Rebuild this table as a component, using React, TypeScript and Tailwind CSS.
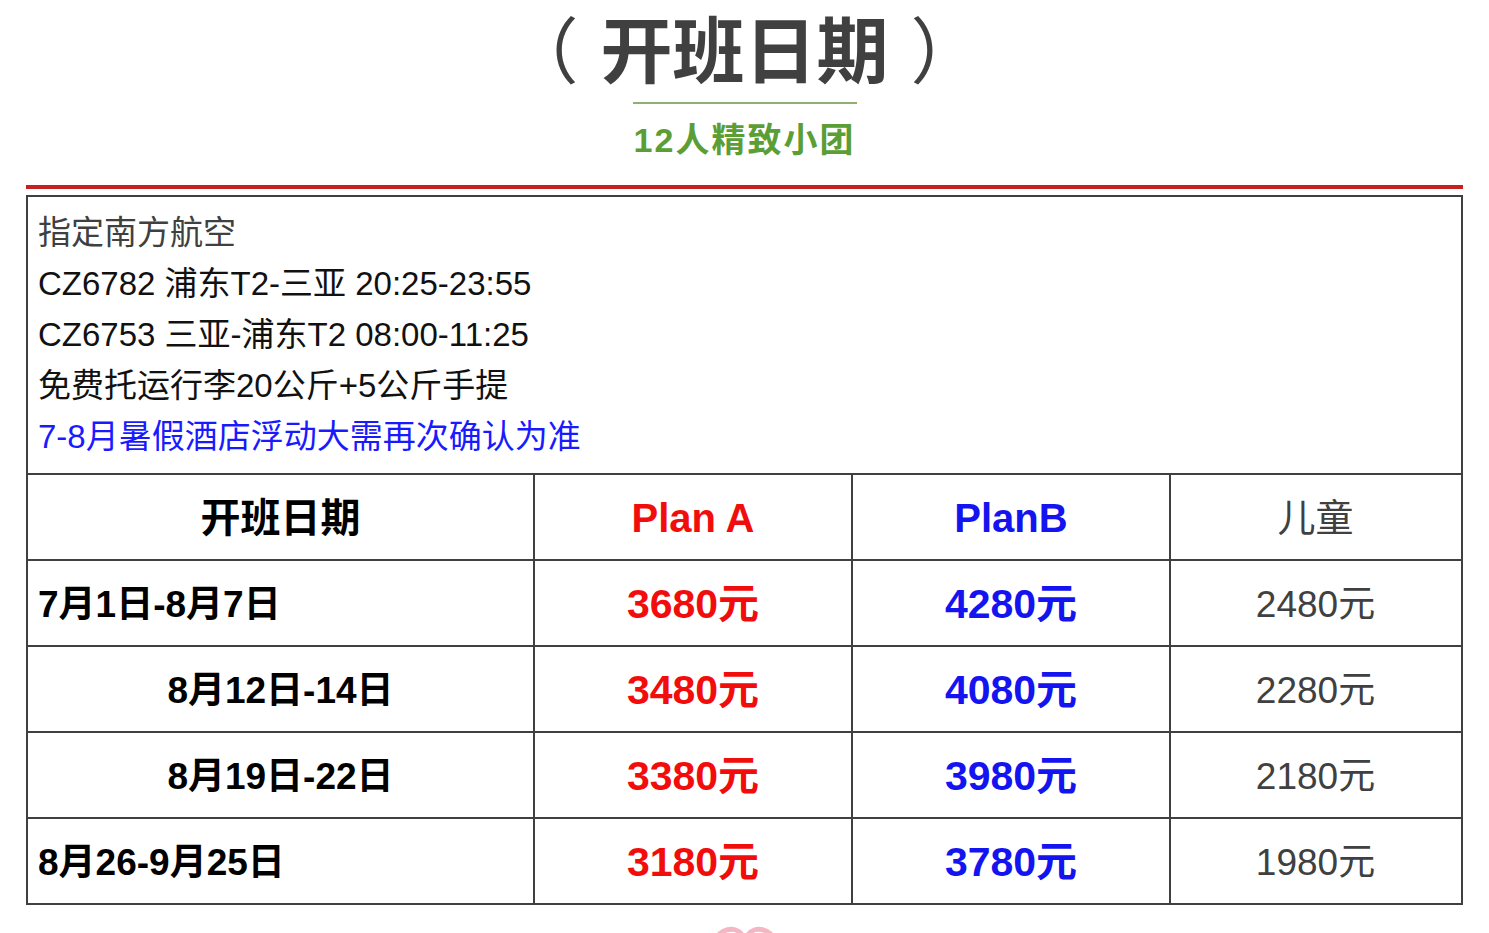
import React from "react";

const FONT = "font-['Liberation_Sans','Noto_Sans_CJK_SC',sans-serif]";

type Row = {
  date: string;
  left: boolean;
  a: string;
  b: string;
  kid: string;
};

const ROWS: Row[] = [
  { date: "7月1日-8月7日", left: true, a: "3680元", b: "4280元", kid: "2480元" },
  { date: "8月12日-14日", left: false, a: "3480元", b: "4080元", kid: "2280元" },
  { date: "8月19日-22日", left: false, a: "3380元", b: "3980元", kid: "2180元" },
  { date: "8月26-9月25日", left: true, a: "3180元", b: "3780元", kid: "1980元" },
];

const GRID = "grid grid-cols-[507px_318px_318px_289px] h-[86px] border-t-2 border-[#404040]";
const CELL = "flex items-center justify-center border-r-2 border-[#404040]";

export default function App() {
  return (
    <div className={`${FONT} w-[1489px] h-[933px] overflow-hidden bg-white`}>
      <div className="flex flex-col items-center pt-[12px]">
        <h1 className="text-[72px] leading-[80px] font-bold text-[#404040]">
          <span className="font-normal mr-[22px]">（</span>开班日期<span className="font-normal ml-[22px]">）</span>
        </h1>
        <div className="mt-[10px] w-[224px] h-[2px] bg-[#8fb070]" />
        <div className="mt-[16px] text-[34px] leading-[40px] font-bold tracking-[2px] text-[#5b9e35]">
          12人精致小团
        </div>
      </div>

      <div className="mx-[26px] mt-[25px] h-[4px] bg-[#c8201f]" />

      <div className="mx-[26px] mt-[6px] border-2 border-[#404040]">
        <div className="px-[10px] pt-[10px] pb-[11px] text-[33px] leading-[51px] text-[#111]">
          <div className="text-[#404040]">指定南方航空</div>
          <div>CZ6782 浦东T2-三亚 20:25-23:55</div>
          <div>CZ6753 三亚-浦东T2 08:00-11:25</div>
          <div>免费托运行李20公斤+5公斤手提</div>
          <div className="text-[#1a1aff]">7-8月暑假酒店浮动大需再次确认为准</div>
        </div>

        <div className={GRID}>
          <div className={`${CELL} pt-[2px] text-[40px] font-bold text-black`}>开班日期</div>
          <div className={`${CELL} pt-[2px] text-[40px] font-bold text-[#f20d0d]`}>Plan A</div>
          <div className={`${CELL} pt-[2px] text-[40px] font-bold text-[#1414f0]`}>PlanB</div>
          <div className="flex items-center justify-center pt-[2px] text-[38px] text-[#404040]">儿童</div>
        </div>

        {ROWS.map((r) => (
          <div key={r.date} className={GRID}>
            <div
              className={`${CELL} pt-[3px] text-[37px] font-bold text-black ${
                r.left ? "justify-start pl-[10px]" : ""
              }`}
            >
              {r.date}
            </div>
            <div className={`${CELL} pt-[3px] text-[41px] font-bold text-[#f20d0d]`}>{r.a}</div>
            <div className={`${CELL} pt-[3px] text-[41px] font-bold text-[#1414f0]`}>{r.b}</div>
            <div className="flex items-center justify-center pt-[3px] text-[37px] text-[#404040]">{r.kid}</div>
          </div>
        ))}
      </div>

      <div className="flex justify-center mt-[18px]">
        <svg width="66" height="20" viewBox="0 0 66 20">
          <path d="M4 18 C6 6 24 2 30 12" stroke="#f4b6c2" strokeWidth="5" fill="none" strokeLinecap="round" />
          <path d="M36 12 C42 2 60 6 62 18" stroke="#f4b6c2" strokeWidth="5" fill="none" strokeLinecap="round" />
        </svg>
      </div>
    </div>
  );
}
